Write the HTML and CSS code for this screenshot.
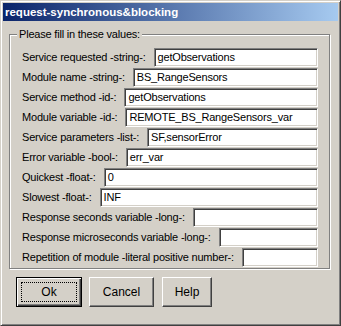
FILE: index.html
```
<!DOCTYPE html>
<html>
<head>
<meta charset="utf-8">
<link rel="stylesheet" href="styles.css">
</head>
<body>
<div class="window">
  <div class="titlebar">request-synchronous&amp;blocking</div>
  <div class="group">
    <div class="legend">Please fill in these values:</div>
    <div class="row"><span class="lbl">Service requested -string-:</span><span class="field">getObservations</span></div>
    <div class="row"><span class="lbl">Module name -string-:</span><span class="field">BS_RangeSensors</span></div>
    <div class="row"><span class="lbl">Service method -id-:</span><span class="field">getObservations</span></div>
    <div class="row"><span class="lbl">Module variable -id-:</span><span class="field">REMOTE_BS_RangeSensors_var</span></div>
    <div class="row"><span class="lbl">Service parameters -list-:</span><span class="field">SF,sensorError</span></div>
    <div class="row"><span class="lbl">Error variable -bool-:</span><span class="field">err_var</span></div>
    <div class="row"><span class="lbl">Quickest -float-:</span><span class="field">0</span></div>
    <div class="row"><span class="lbl">Slowest -float-:</span><span class="field">INF</span></div>
    <div class="row"><span class="lbl">Response seconds variable -long-:</span><span class="field"></span></div>
    <div class="row"><span class="lbl">Response microseconds variable -long-:</span><span class="field"></span></div>
    <div class="row"><span class="lbl">Repetition of module -literal positive number-:</span><span class="field"></span></div>
  </div>
  <div class="buttons">
    <div class="btn default"><span class="focus">Ok</span></div>
    <div class="btn cancel">Cancel</div>
    <div class="btn help">Help</div>
  </div>
</div>
</body>
</html>
```
FILE: styles.css
```
* { box-sizing: border-box; }
html, body { margin: 0; padding: 0; }
body {
  font-family: "Liberation Sans", Arial, sans-serif;
  font-size: 11px;
  letter-spacing: -0.2px;
  color: #000;
  background: #d4d0c8;
}
.window {
  width: 341px;
  height: 326px;
  background: #d4d0c8;
  border: 1px solid;
  border-color: #d4d0c8 #404040 #404040 #d4d0c8;
  box-shadow: inset 1px 1px #fff, inset -1px -1px #808080;
  padding: 2px 2px 0 2px;
}
.titlebar {
  height: 18px;
  background: linear-gradient(to right, #0a246a, #a6caf0);
  color: #fff;
  font-weight: bold;
  font-size: 11.5px;
  letter-spacing: 0;
  line-height: 18px;
  padding-left: 2px;
}
.group {
  margin: 13px 8px 0 6px;
  height: 235px;
  border: 1px solid #808080;
  box-shadow: inset 1px 1px #fff, 1px 1px #fff;
  position: relative;
  padding: 12px 11px 0 12px;
}
.legend {
  position: absolute;
  top: -7px;
  left: 7px;
  padding: 0 2px;
  background: #d4d0c8;
  line-height: 13px;
}
.row {
  display: flex;
  align-items: center;
  height: 20px;
}
.lbl {
  white-space: nowrap;
  padding-right: 8px;
}
.field {
  flex: 1;
  height: 19px;
  background: #fff;
  border: 1px solid;
  border-color: #808080 #fff #fff #808080;
  box-shadow: inset 1px 1px #404040, inset -1px -1px #d4d0c8;
  padding: 0 3px;
  line-height: 17px;
  white-space: nowrap;
  overflow: hidden;
}
.buttons {
  display: flex;
  margin: 8px 0 0 13px;
  gap: 7px;
}
.btn {
  height: 30px;
  width: 65px;
  display: flex;
  align-items: center;
  justify-content: center;
  border: 1px solid;
  border-color: #fff #404040 #404040 #fff;
  box-shadow: inset -1px -1px #808080;
  font-size: 12px;
  letter-spacing: 0;
}
.btn.default {
  width: 66px;
  border: 1px solid #000;
  box-shadow: inset 1px 1px #fff, inset -1px -1px #404040, inset -2px -2px #808080;
  padding: 4px;
}
.focus {
  width: 100%;
  height: 100%;
  border: 1px dotted #000;
  display: flex;
  align-items: center;
  justify-content: center;
}
.btn.help { width: 50px; margin-left: 1px; }
```
